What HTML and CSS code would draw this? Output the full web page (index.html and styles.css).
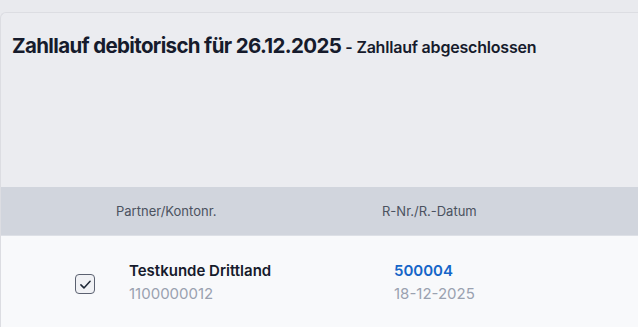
FILE: index.html
```html
<!DOCTYPE html>
<html lang="de">
<head>
<meta charset="utf-8">
<link rel="stylesheet" href="styles.css">
</head>
<body>
<div class="page">
  <div class="card">
    <div class="title-area">
      <h1 class="title">Zahllauf debitorisch für 26.12.2025 <span class="status">- Zahllauf abgeschlossen</span></h1>
    </div>
    <div class="table">
      <div class="thead">
        <div class="col-check"></div>
        <div class="col-partner">Partner/Kontonr.</div>
        <div class="col-rnr">R-Nr./R.-Datum</div>
      </div>
      <div class="row">
        <div class="col-check">
          <span class="checkbox">
            <svg viewBox="0 0 20 20" width="20" height="20"><path d="M4.6 10.4 L8.2 14 L15.4 6.2" fill="none" stroke="#1f2937" stroke-width="1.8" stroke-linecap="round" stroke-linejoin="round"/></svg>
          </span>
        </div>
        <div class="col-partner">
          <div class="primary">Testkunde Drittland</div>
          <div class="secondary">1100000012</div>
        </div>
        <div class="col-rnr">
          <div class="primary link">500004</div>
          <div class="secondary">18-12-2025</div>
        </div>
      </div>
    </div>
  </div>
</div>
</body>
</html>
```
FILE: styles.css
```css
html, body {
  margin: 0;
  padding: 0;
  background: #e9eaee;
  font-family: Inter, "Noto Sans", sans-serif;
  overflow: hidden;
}
.page {
  padding-top: 12px;
}
.card {
  background: #ebecf0;
  border-top: 1px solid #dcdde2;
  border-left: 1px solid #dcdde2;
  border-top-left-radius: 6px;
}
.title-area {
  height: 174px;
  padding: 19px 0 0 11px;
  box-sizing: border-box;
}
.title {
  margin: 0;
  font-size: 20.5px;
  font-weight: 700;
  color: #161b2c;
  letter-spacing: -0.65px;
  line-height: 28px;
}
.status {
  font-size: 16px;
  font-weight: 600;
  letter-spacing: -0.2px;
}
.thead {
  display: flex;
  align-items: center;
  height: 48px;
  background: #d1d5dd;
  font-size: 13px;
  color: #4b5260;
  border-bottom: 1px solid #dde0e6;
}
.row {
  display: flex;
  align-items: center;
  height: 92px;
  background: #f8f9fb;
}
.col-check {
  width: 128px;
  padding-left: 74px;
  box-sizing: border-box;
  display: flex;
  align-items: center;
}
.thead .col-check {
  width: 115px;
}
.thead .col-partner {
  width: 266px;
}
.col-partner {
  width: 265px;
}
.checkbox {
  width: 20px;
  height: 20px;
  box-sizing: border-box;
  border: 1.5px solid #5b6170;
  border-radius: 4px;
  background: #f1f2f5;
  display: flex;
  align-items: center;
  justify-content: center;
  margin-top: 4px;
}
.checkbox svg {
  width: 17px;
  height: 17px;
  flex: none;
}
.primary {
  font-size: 15px;
  font-weight: 600;
  color: #161b2c;
  line-height: 23px;
}
.link {
  color: #1565c8;
}
.secondary {
  font-size: 15px;
  color: #9aa1b0;
  line-height: 23px;
}
```
